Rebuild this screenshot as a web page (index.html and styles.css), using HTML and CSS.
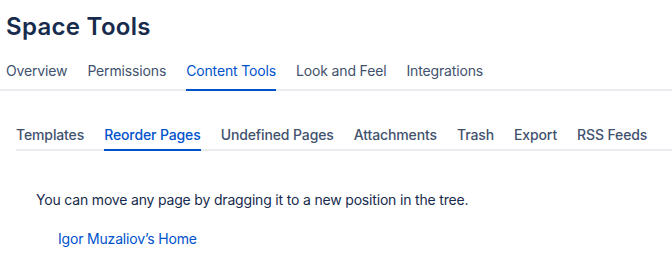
FILE: index.html
```html
<!DOCTYPE html>
<html lang="en">
<head>
    <meta charset="UTF-8">
    <title>Space Tools</title>
    <link rel="stylesheet" href="styles.css">
</head>
<body>
    <h1 class="title">Space Tools</h1>
    <nav class="tabs">
        <a href="#">Overview</a>
        <a href="#">Permissions</a>
        <a href="#" class="active">Content Tools</a>
        <a href="#">Look and Feel</a>
        <a href="#">Integrations</a>
    </nav>
    <nav class="tabs sub-tabs">
        <a href="#">Templates</a>
        <a href="#" class="active">Reorder Pages</a>
        <a href="#">Undefined Pages</a>
        <a href="#">Attachments</a>
        <a href="#">Trash</a>
        <a href="#">Export</a>
        <a href="#">RSS Feeds</a>
    </nav>
    <div class="content">
        <p>You can move any page by dragging it to a new position in the tree.</p>
        <a href="#" class="tree-link">Igor Muzaliov’s Home</a>
    </div>
</body>
</html>
```

FILE: styles.css
```css
body {
    margin: 0;
    font-family: Inter, 'Noto Sans', sans-serif;
    color: #172b4d;
    background-color: #fff;
}

.title {
    margin: 0;
    padding: 11px 6px 0;
    font-size: 24px;
    font-weight: 600;
    line-height: 32px;
    letter-spacing: 0.3px;
}

.tabs {
    display: flex;
    gap: 20px;
    padding: 0 6px;
    margin-top: 18px;
    border-bottom: 2px solid #ebecf0;
}

.tabs a {
    color: #42526e;
    text-decoration: none;
    font-size: 14px;
    line-height: 20px;
    letter-spacing: -0.15px;
    padding: 0 0 8px;
    margin-bottom: -2px;
    border-bottom: 2px solid transparent;
}

.tabs a.active {
    color: #0052cc;
    border-bottom-color: #0052cc;
}

.sub-tabs {
    margin: 34px 0 0 16px;
    padding: 0;
}

.sub-tabs a {
    font-weight: 500;
    letter-spacing: -0.12px;
    padding-bottom: 4px;
}

.content {
    padding: 0 36px;
}

.content p {
    margin: 39px 0 0;
    font-size: 14px;
    line-height: 20px;
    letter-spacing: -0.18px;
}

.tree-link {
    display: inline-block;
    margin: 19px 0 0 22px;
    color: #0052cc;
    text-decoration: none;
    font-size: 14px;
    line-height: 20px;
    letter-spacing: -0.18px;
}
```
